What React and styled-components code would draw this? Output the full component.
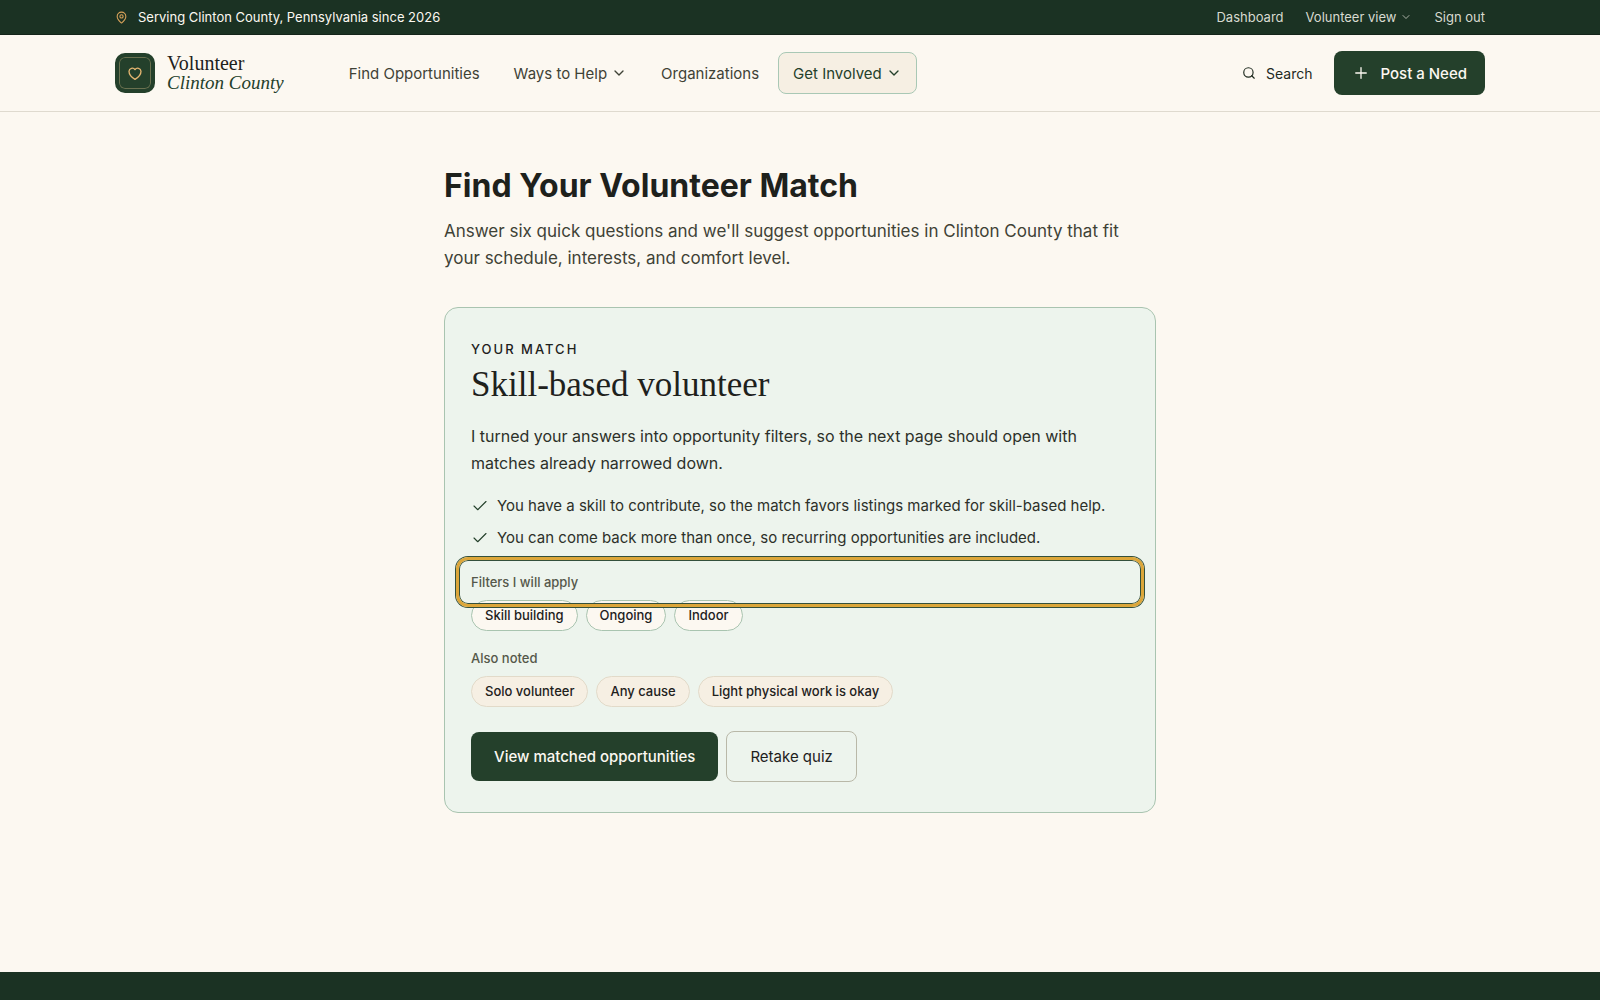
import styled, { createGlobalStyle } from "styled-components";
import { Check, ChevronDown, MapPin, Plus, Search } from "lucide-react";

const NAV_ITEMS = [
  { label: "Find Opportunities" },
  { label: "Ways to Help", menu: true },
  { label: "Organizations" },
  { label: "Get Involved", menu: true, active: true },
];

const REASONS = [
  "You have a skill to contribute, so the match favors listings marked for skill-based help.",
  "You can come back more than once, so recurring opportunities are included.",
];

const FILTERS = ["Skill building", "Ongoing", "Indoor"];
const NOTES = ["Solo volunteer", "Any cause", "Light physical work is okay"];

const HeartIcon = () => (
  <svg
    width="16"
    height="16"
    viewBox="0 0 24 24"
    fill="none"
    stroke="currentColor"
    strokeWidth="2"
    strokeLinejoin="round"
    aria-hidden="true"
  >
    <path d="M12 21.5S3 16 3 9.3A4.9 4.9 0 0 1 12 7a4.9 4.9 0 0 1 9 2.3C21 16 12 21.5 12 21.5z" />
  </svg>
);

const App = () => (
  <Page>
    <GlobalStyle />
    <TopBar>
      <Container>
        <Location>
          <MapPin size={13} color="#d9a35a" />
          Serving Clinton County, Pennsylvania since 2026
        </Location>
        <AccountNav aria-label="Account">
          <AccountLink href="#dashboard">Dashboard</AccountLink>
          <AccountButton type="button">
            Volunteer view
            <ChevronDown size={12} strokeWidth={1.5} />
          </AccountButton>
          <AccountButton type="button">Sign out</AccountButton>
        </AccountNav>
      </Container>
    </TopBar>

    <Header>
      <Container>
        <Brand href="#home">
          <BrandMark>
            <HeartIcon />
          </BrandMark>
          <BrandName>
            Volunteer
            <em>Clinton County</em>
          </BrandName>
        </Brand>
        <MainNav aria-label="Main">
          {NAV_ITEMS.map(({ label, menu, active }) =>
            menu ? (
              <NavButton key={label} type="button" $active={active}>
                {label}
                <ChevronDown size={16} strokeWidth={2} />
              </NavButton>
            ) : (
              <NavLink key={label} href="#nav">
                {label}
              </NavLink>
            )
          )}
        </MainNav>
        <HeaderActions>
          <SearchButton type="button">
            <Search size={14} />
            Search
          </SearchButton>
          <PostLink href="#post">
            <Plus size={18} strokeWidth={1.75} />
            Post a Need
          </PostLink>
        </HeaderActions>
      </Container>
    </Header>

    <Main>
      <Title>Find Your Volunteer Match</Title>
      <Lead>
        Answer six quick questions and we'll suggest opportunities in Clinton
        County that fit your schedule, interests, and comfort level.
      </Lead>

      <Card>
        <Eyebrow>Your match</Eyebrow>
        <MatchName>Skill-based volunteer</MatchName>
        <Summary>
          I turned your answers into opportunity filters, so the next page
          should open with matches already narrowed down.
        </Summary>
        <Reasons>
          {REASONS.map((reason) => (
            <Reason key={reason}>
              <Check size={18} strokeWidth={1.5} />
              {reason}
            </Reason>
          ))}
        </Reasons>

        <GroupLabel $ring>Filters I will apply</GroupLabel>
        <Chips>
          {FILTERS.map((name) => (
            <Chip key={name}>{name}</Chip>
          ))}
        </Chips>

        <GroupLabel>Also noted</GroupLabel>
        <Chips>
          {NOTES.map((name) => (
            <Chip key={name} $muted>
              {name}
            </Chip>
          ))}
        </Chips>

        <Actions>
          <PrimaryLink href="#matches">View matched opportunities</PrimaryLink>
          <OutlineButton type="button">Retake quiz</OutlineButton>
        </Actions>
      </Card>
    </Main>

    <Footer />
  </Page>
);

export default App;

const GlobalStyle = createGlobalStyle`
  * {
    box-sizing: border-box;
  }

  body {
    margin: 0;
    background: #fcf8f1;
    color: #1e211c;
    font-family: Inter, "Liberation Sans", sans-serif;
    font-size: 16px;
  }

  button {
    font: inherit;
    cursor: pointer;
  }

  a {
    color: inherit;
    text-decoration: none;
  }

  svg {
    flex-shrink: 0;
  }
`;

const Page = styled.div`
  display: flex;
  flex-direction: column;
  min-height: 100vh;
`;

const Container = styled.div`
  display: flex;
  align-items: center;
  width: 100%;
  max-width: 1418px;
  margin: 0 auto;
  padding: 0 24px;
`;

const TopBar = styled.div`
  background: #1b3223;
  border-bottom: 1px solid #14241a;
  color: #fcf8f1;
  font-size: 13px;
  line-height: 34px;
`;

const Location = styled.p`
  display: flex;
  align-items: center;
  gap: 10px;
  margin: 0;
`;

const AccountNav = styled.nav`
  display: flex;
  align-items: center;
  gap: 22px;
  margin-left: auto;
  color: #d8dad0;
`;

const AccountLink = styled.a``;

const AccountButton = styled.button`
  display: flex;
  align-items: center;
  gap: 4px;
  padding: 0;
  border: none;
  background: none;
  color: inherit;
`;

const Header = styled.header`
  padding: 16px 0;
  border-bottom: 1px solid #dfdacf;
`;

const Brand = styled.a`
  display: flex;
  align-items: center;
  gap: 12px;
`;

const BrandMark = styled.span`
  display: flex;
  align-items: center;
  justify-content: center;
  width: 40px;
  height: 40px;
  border: 4px solid #24402b;
  border-radius: 10px;
  background: #24402b;
  box-shadow: inset 0 0 0 1px #6a7150;
  color: #e5b671;
`;

const BrandName = styled.span`
  display: flex;
  flex-direction: column;
  font-family: "Liberation Serif", serif;
  font-size: 20px;
  line-height: 19px;

  em {
    color: #24402b;
    font-size: 19px;
  }
`;

const MainNav = styled.nav`
  display: flex;
  align-items: center;
  gap: 4px;
  margin-left: 50px;
`;

const NavLink = styled.a`
  display: flex;
  align-items: center;
  gap: 4px;
  height: 42px;
  padding: 0 14px;
  border: 1px solid transparent;
  border-radius: 8px;
  color: #3f4236;
  font-size: 15px;
  white-space: nowrap;
`;

const NavButton = styled(NavLink).attrs({ as: "button" })`
  border-color: ${({ $active }) => ($active ? "#a9c8b5" : "transparent")};
  background: ${({ $active }) => ($active ? "#f6efe3" : "none")};
  color: ${({ $active }) => ($active ? "#24402b" : "#3f4236")};
`;

const HeaderActions = styled.div`
  display: flex;
  align-items: center;
  gap: 22px;
  margin-left: auto;
`;

const SearchButton = styled.button`
  display: flex;
  align-items: center;
  gap: 10px;
  padding: 0;
  border: none;
  background: none;
  color: #1e2a1f;
  font-size: 14px;
`;

const PostLink = styled.a`
  display: flex;
  align-items: center;
  gap: 10px;
  height: 44px;
  padding: 0 18px;
  border-radius: 8px;
  background: #24402b;
  color: #fcf8f1;
  font-size: 15px;
  font-weight: 500;
`;

const Main = styled.main`
  flex: 1;
  width: 100%;
  max-width: 760px;
  margin: 0 auto;
  padding: 52px 24px 64px;
`;

const Title = styled.h1`
  margin: 0 0 10px;
  font-size: 32px;
  line-height: 44px;
`;

const Lead = styled.p`
  margin: 0 0 35px;
  color: #3f4236;
  font-size: 17px;
  line-height: 27px;
`;

const Card = styled.section`
  padding: 31px 26px 30px;
  border: 1px solid #a9c4b0;
  border-radius: 14px;
  background: #edf4ed;
`;

const Eyebrow = styled.p`
  margin: 0;
  font-size: 13px;
  font-weight: 500;
  letter-spacing: 2px;
  line-height: 20px;
  text-transform: uppercase;
`;

const MatchName = styled.h2`
  margin: 6px 0 18px;
  font-family: "Liberation Serif", serif;
  font-size: 35px;
  font-weight: 400;
  line-height: 40px;
`;

const Summary = styled.p`
  margin: 0;
  color: #2c3029;
  line-height: 27px;
`;

const Reasons = styled.ul`
  display: flex;
  flex-direction: column;
  gap: 8px;
  margin: 17px 0 22px;
  padding: 0;
  list-style: none;
`;

const Reason = styled.li`
  display: flex;
  align-items: center;
  gap: 8px;
  color: #2c3029;
  font-size: 15px;
  line-height: 24px;

  svg {
    color: #24402b;
  }
`;

const GroupLabel = styled.p`
  position: relative;
  margin: 0;
  color: #55584a;
  font-size: 13px;
  font-weight: 500;
  line-height: 20px;

  /* highlight ring, drawn over the chips below the label */
  &::after {
    content: ${({ $ring }) => ($ring ? '""' : "none")};
    position: absolute;
    inset: -15px;
    border: 3px solid #dca63a;
    border-radius: 12px;
    box-shadow: 0 0 0 1px #34503c, inset 0 0 0 1px #34503c;
    pointer-events: none;
  }
`;

const Chips = styled.ul`
  display: flex;
  flex-wrap: wrap;
  gap: 8px;
  margin: 8px 0 17px;
  padding: 0;
  list-style: none;
`;

const Chip = styled.li`
  padding: 0 13px;
  border: 1px solid ${({ $muted }) => ($muted ? "#e2dac9" : "#a9c4b0")};
  border-radius: 16px;
  background: ${({ $muted }) => ($muted ? "#f6efe3" : "#fcf8f1")};
  font-size: 13px;
  font-weight: 500;
  line-height: 29px;
`;

const Actions = styled.div`
  display: flex;
  align-items: center;
  gap: 8px;
  margin-top: 24px;
  font-size: 15px;
`;

const PrimaryLink = styled.a`
  padding: 0 23px;
  border-radius: 8px;
  background: #24402b;
  color: #fcf8f1;
  font-weight: 500;
  line-height: 49px;
`;

const OutlineButton = styled.button`
  padding: 0 23px;
  border: 1px solid #b9b8a8;
  border-radius: 8px;
  background: none;
  color: #1e211c;
  line-height: 49px;
`;

const Footer = styled.footer`
  height: 28px;
  background: #1b3223;
`;
